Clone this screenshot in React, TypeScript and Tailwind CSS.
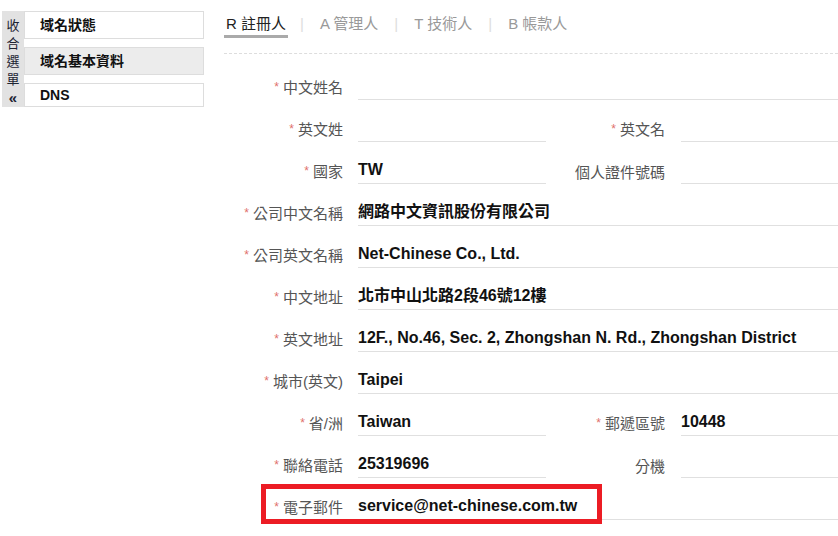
const FONT = "font-['Liberation_Sans','Noto_Sans_CJK_TC',sans-serif]";

type Field = { label: string; required?: boolean; value?: string };
type Row = Field[];

const rows: Row[] = [
  [{ label: "中文姓名", required: true }],
  [
    { label: "英文姓", required: true },
    { label: "英文名", required: true },
  ],
  [
    { label: "國家", required: true, value: "TW" },
    { label: "個人證件號碼" },
  ],
  [{ label: "公司中文名稱", required: true, value: "網路中文資訊股份有限公司" }],
  [{ label: "公司英文名稱", required: true, value: "Net-Chinese Co., Ltd." }],
  [{ label: "中文地址", required: true, value: "北市中山北路2段46號12樓" }],
  [
    {
      label: "英文地址",
      required: true,
      value: "12F., No.46, Sec. 2, Zhongshan N. Rd., Zhongshan District",
    },
  ],
  [{ label: "城市(英文)", required: true, value: "Taipei" }],
  [
    { label: "省/洲", required: true, value: "Taiwan" },
    { label: "郵遞區號", required: true, value: "10448" },
  ],
  [
    { label: "聯絡電話", required: true, value: "25319696" },
    { label: "分機" },
  ],
  [{ label: "電子郵件", required: true, value: "service@net-chinese.com.tw" }],
];

const Label = ({ field, right }: { field: Field; right?: boolean }) => (
  <div
    className={`${
      right ? "w-[135px] pr-[16px]" : "w-[134px] pr-[15px]"
    } shrink-0 pb-[1px] text-right text-[15px] leading-[20px] text-[#555] whitespace-nowrap`}
  >
    {field.required && (
      <span className="relative -top-[2px] mr-[4px] text-[12px] text-[#e0706b]">*</span>
    )}
    {field.label}
  </div>
);

const Value = ({ value, className }: { value?: string; className: string }) => (
  <div
    className={`${className} flex h-full items-end border-b border-[#e0e0e0] pb-[3px] text-[16px] font-bold leading-[20px] text-[#111] whitespace-nowrap`}
  >
    {value}
  </div>
);

const FormRow = ({ row }: { row: Row }) => (
  <div className="flex h-[42px] items-end">
    <Label field={row[0]} />
    <Value value={row[0].value} className={row.length > 1 ? "w-[188px] shrink-0" : "flex-1"} />
    {row[1] && (
      <>
        <Label field={row[1]} right />
        <Value value={row[1].value} className="flex-1" />
      </>
    )}
  </div>
);

const tabs = ["R 註冊人", "A 管理人", "T 技術人", "B 帳款人"];

export default function App() {
  return (
    <div className={`${FONT} relative h-[536px] w-[838px] overflow-hidden bg-white`}>
      <div className="flex">
        {/* Sidebar */}
        <div className="ml-[2px] mt-[11px] flex w-[202px] shrink-0">
          <div className="flex h-[96px] w-[22px] shrink-0 flex-col items-center bg-[#e2e2e2] pt-[6px] text-[13px] leading-[18px] text-[#1d2433]">
            <span>收</span>
            <span>合</span>
            <span>選</span>
            <span>單</span>
            <span className="text-[15px] font-bold">«</span>
          </div>
          <div className="flex flex-1 flex-col gap-[8px]">
            <div className="flex h-[28px] items-center border border-[#ddd] bg-white pl-[15px] text-[14px] font-bold text-[#111]">
              域名狀態
            </div>
            <div className="flex h-[28px] items-center border border-[#ddd] bg-[#ececec] pl-[15px] text-[14px] font-bold text-[#111]">
              域名基本資料
            </div>
            <div className="flex h-[24px] items-center border border-[#ddd] bg-white pl-[15px] text-[14px] font-bold text-[#111]">
              DNS
            </div>
          </div>
        </div>

        {/* Main */}
        <div className="ml-[20px] flex-1">
          <div className="flex items-start pt-[14px] text-[15px] leading-[20px]">
            {tabs.map((t, i) => (
              <div key={t} className="flex items-start">
                {i > 0 && <span className="px-[16px] text-[#ddd]">|</span>}
                <span
                  className={
                    i === 0
                      ? "-mr-[4px] border-b-[3px] border-[#aaa] px-[2px] pb-[1px] text-[#222]"
                      : "text-[#999]"
                  }
                >
                  {t}
                </span>
              </div>
            ))}
          </div>
          <div className="mt-[15px] border-t border-dashed border-[#ddd]" />
          <div className="mt-[4px] flex flex-col">
            {rows.map((row, i) => (
              <FormRow key={i} row={row} />
            ))}
          </div>
        </div>
      </div>

      {/* highlight annotation */}
      <div className="absolute left-[261px] top-[484px] h-[40px] w-[341px] border-[5px] border-[#ec1c24]" />
    </div>
  );
}
